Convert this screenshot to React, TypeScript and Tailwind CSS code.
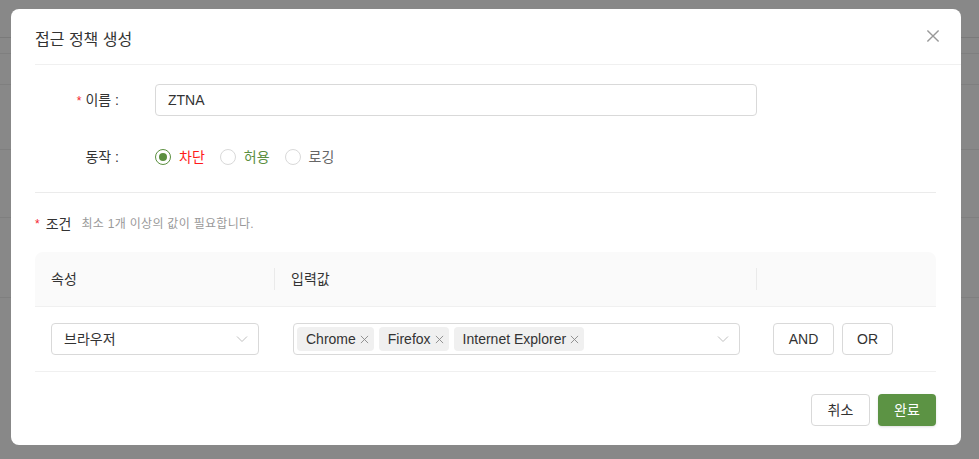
import { useState } from 'react'

const font = { fontFamily: '"Liberation Sans", "Noto Sans CJK KR", sans-serif' }

function Chevron() {
  return (
    <svg width="12" height="12" viewBox="0 0 12 12" className="text-[#bfbfbf]">
      <path d="M1 3.5 L6 8.5 L11 3.5" fill="none" stroke="currentColor" strokeWidth="1" />
    </svg>
  )
}

function Cross({ size = 10, className = '' }: { size?: number; className?: string }) {
  return (
    <svg width={size} height={size} viewBox="0 0 10 10" className={className}>
      <path d="M1 1 L9 9 M9 1 L1 9" fill="none" stroke="currentColor" strokeWidth="1" />
    </svg>
  )
}

function Radio({ checked, label, color }: { checked: boolean; label: string; color: string }) {
  return (
    <label className="flex items-center gap-2 mr-[15px]">
      <span
        className={`w-4 h-4 rounded-full border flex items-center justify-center ${
          checked ? 'border-[#5b8f3f]' : 'border-[#d9d9d9]'
        }`}
      >
        {checked && <span className="w-2 h-2 rounded-full bg-[#5b8f3f]" />}
      </span>
      <span className={`text-sm ${color}`}>{label}</span>
    </label>
  )
}

export default function App() {
  const [tags] = useState(['Chrome', 'Firefox', 'Internet Explorer'])

  return (
    <div className="relative w-[979px] h-[459px] overflow-hidden bg-[#888888]" style={font}>
      {/* page behind the mask */}
      <div className="flex flex-col">
        <div className="h-[38px] border-b border-[#7a7a7a]" />
        <div className="h-[16px] border-b border-[#7f7f7f]" />
        <div className="h-[31px] border-b border-[#7f7f7f]" />
        <div className="h-[65px] border-b border-[#7f7f7f]" />
        <div className="h-[68px] border-b border-[#7f7f7f]" />
        <div className="h-[80px] border-b border-[#7f7f7f]" />
      </div>

      <div className="absolute left-[11px] top-[9px] w-[950px] h-[436px] bg-white rounded-lg flex flex-col">
        <div className="ml-6 h-[56px] border-b border-[#f0f0f0] flex items-center justify-between pr-[21px]">
          <h1 className="text-base text-[#333] pt-[6px]">접근 정책 생성</h1>
          <Cross size={14} className="text-[#999] -mt-[2px]" />
        </div>

        <div className="px-6 pr-[25px] flex flex-col">
          <div className="flex items-center mt-[19px] h-[32px]">
            <div className="w-[84px] text-right text-sm text-[#333]">
              <span className="text-[#f5222d] text-xs mr-1">*</span>이름 :
            </div>
            <div className="ml-[36px] w-[602px] h-[32px] border border-[#d9d9d9] rounded-sm flex items-center px-3 text-sm text-[#333]">
              ZTNA
            </div>
          </div>

          <div className="flex items-center mt-[25px] h-[32px]">
            <div className="w-[84px] text-right text-sm text-[#333]">동작 :</div>
            <div className="ml-[36px] flex items-center">
              <Radio checked label="차단" color="text-[#ff1a1a]" />
              <Radio checked={false} label="허용" color="text-[#5b8f3f]" />
              <Radio checked={false} label="로깅" color="text-[#666]" />
            </div>
          </div>

          <div className="mt-[19px] border-b border-[#ebebeb]" />

          <div className="mt-[21px] flex items-center h-[20px]">
            <span className="text-[#f5222d] text-xs mr-[6px]">*</span>
            <span className="text-sm text-[#333]">조건</span>
            <span className="ml-[10px] text-xs text-[#999] tracking-[0.3px]">최소 1개 이상의 값이 필요합니다.</span>
          </div>

          <div className="mt-[18px]">
            <div className="flex h-[55px] bg-[#fafafa] rounded-t-lg border-b border-[#f0f0f0] text-sm text-[#333]">
              <div className="w-[240px] flex items-center pl-4 relative">
                속성
                <span className="absolute right-0 top-4 bottom-4 w-px bg-[#eaeaea]" />
              </div>
              <div className="w-[482px] flex items-center pl-4 relative">
                입력값
                <span className="absolute right-0 top-4 bottom-4 w-px bg-[#eaeaea]" />
              </div>
              <div className="flex-1" />
            </div>

            <div className="flex h-[65px] border-b border-[#f0f0f0] items-center">
              <div className="w-[240px] pl-4">
                <div className="w-[208px] h-[32px] border border-[#d9d9d9] rounded-sm flex items-center justify-between pl-3 pr-[10px] text-sm text-[#333]">
                  브라우저
                  <Chevron />
                </div>
              </div>
              <div className="w-[482px] pl-[18px]">
                <div className="w-[447px] h-[32px] border border-[#d9d9d9] rounded-sm flex items-center justify-between pl-[3px] pr-[10px]">
                  <div className="flex gap-[5px]">
                    {tags.map((t) => (
                      <span
                        key={t}
                        className="h-[24px] bg-[#f0f0f0] rounded-sm flex items-center gap-[4px] pl-[9px] pr-[5px] text-sm text-[#333]"
                      >
                        {t}
                        <Cross size={9} className="text-[#888]" />
                      </span>
                    ))}
                  </div>
                  <Chevron />
                </div>
              </div>
              <div className="flex-1 pl-4 flex gap-2">
                <button className="w-[61px] h-[32px] border border-[#d9d9d9] rounded-sm text-sm text-[#333] bg-white">
                  AND
                </button>
                <button className="w-[51px] h-[32px] border border-[#d9d9d9] rounded-sm text-sm text-[#333] bg-white">
                  OR
                </button>
              </div>
            </div>
          </div>

          <div className="flex justify-end gap-2 mt-[22px]">
            <button className="w-[59px] h-[32px] border border-[#d9d9d9] rounded-sm text-sm text-[#333] bg-white">
              취소
            </button>
            <button className="w-[58px] h-[32px] rounded-sm text-sm text-white bg-[#5c9344] shadow-sm">
              완료
            </button>
          </div>
        </div>
      </div>
    </div>
  )
}
